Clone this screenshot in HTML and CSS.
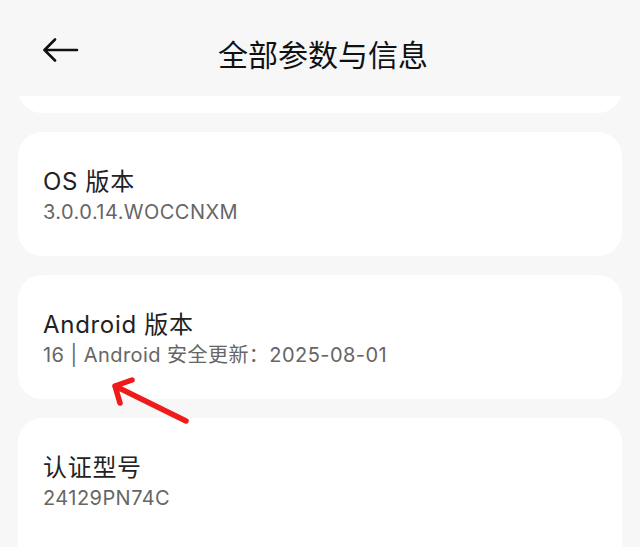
FILE: index.html
```html
<!DOCTYPE html>
<html lang="zh-CN">
<head>
<meta charset="utf-8">
<title>全部参数与信息</title>
<link rel="stylesheet" href="styles.css">
</head>
<body>
<div class="screen">
  <header class="header">
    <div class="back">
      <svg width="40" height="30" viewBox="0 0 40 30" aria-hidden="true">
        <path d="M36 12 H4 M14 1.5 L3.5 12 L14 22.5" fill="none" stroke="#111" stroke-width="2.6" stroke-linecap="round" stroke-linejoin="round"/>
      </svg>
    </div>
    <h1 class="title">全部参数与信息</h1>
    <div class="spacer"></div>
  </header>
  <main class="list">
    <section class="card peek"></section>
    <section class="card">
      <div class="card-title">OS 版本</div>
      <div class="card-sub">3.0.0.14.WOCCNXM</div>
    </section>
    <section class="card">
      <div class="card-title">Android 版本</div>
      <div class="card-sub">16 | Android 安全更新：2025-08-01</div>
    </section>
    <section class="card tall">
      <div class="card-title">认证型号</div>
      <div class="card-sub">24129PN74C</div>
    </section>
  </main>
  <svg class="annot" width="640" height="547" viewBox="0 0 640 547" aria-hidden="true">
    <path d="M186 421 L115 386 M132 380 L115 386 L120 403" fill="none" stroke="#ef1b1b" stroke-width="5.5" stroke-linecap="round" stroke-linejoin="round"/>
  </svg>
</div>
</body>
</html>
```
FILE: styles.css
```css
* { box-sizing: border-box; }
html, body {
  margin: 0;
  padding: 0;
  background: #f7f7f7;
}
body {
  font-family: Inter, "Noto Sans CJK SC", sans-serif;
  color: #1c1c1c;
}
.screen {
  position: relative;
  width: 640px;
  height: 547px;
  overflow: hidden;
  display: flex;
  flex-direction: column;
}
.header {
  height: 96px;
  flex: none;
  padding-top: 10px;
  display: grid;
  grid-template-columns: 100px 1fr 100px;
  align-items: center;
  background: #f7f7f7;
  position: relative;
  z-index: 1;
}
.back {
  padding-left: 41px;
  display: flex;
  align-items: center;
}
.back svg { display: block; }
.title {
  margin: 0;
  text-align: center;
  font-family: "Noto Sans CJK SC", sans-serif;
  font-weight: 400;
  font-size: 30px;
  line-height: 40px;
  color: #111;
  padding-left: 6px;
}
.list {
  flex: 1;
  overflow: hidden;
  padding: 0 18px;
  display: flex;
  flex-direction: column;
  gap: 19px;
}
.card {
  flex: none;
  height: 124px;
  background: #fff;
  border-radius: 24px;
  padding: 34px 25px 0;
  display: flex;
  flex-direction: column;
}
.card.peek {
  margin-top: -107px;
}
.card.tall {
  height: 170px;
}
.card-title {
  font-size: 24px;
  line-height: 32px;
  color: #222;
  letter-spacing: 0.7px;
}
.card-sub {
  font-size: 20px;
  line-height: 28px;
  color: #666;
  letter-spacing: 0.45px;
}
.annot {
  position: absolute;
  left: 0;
  top: 0;
  z-index: 2;
  pointer-events: none;
}
```
